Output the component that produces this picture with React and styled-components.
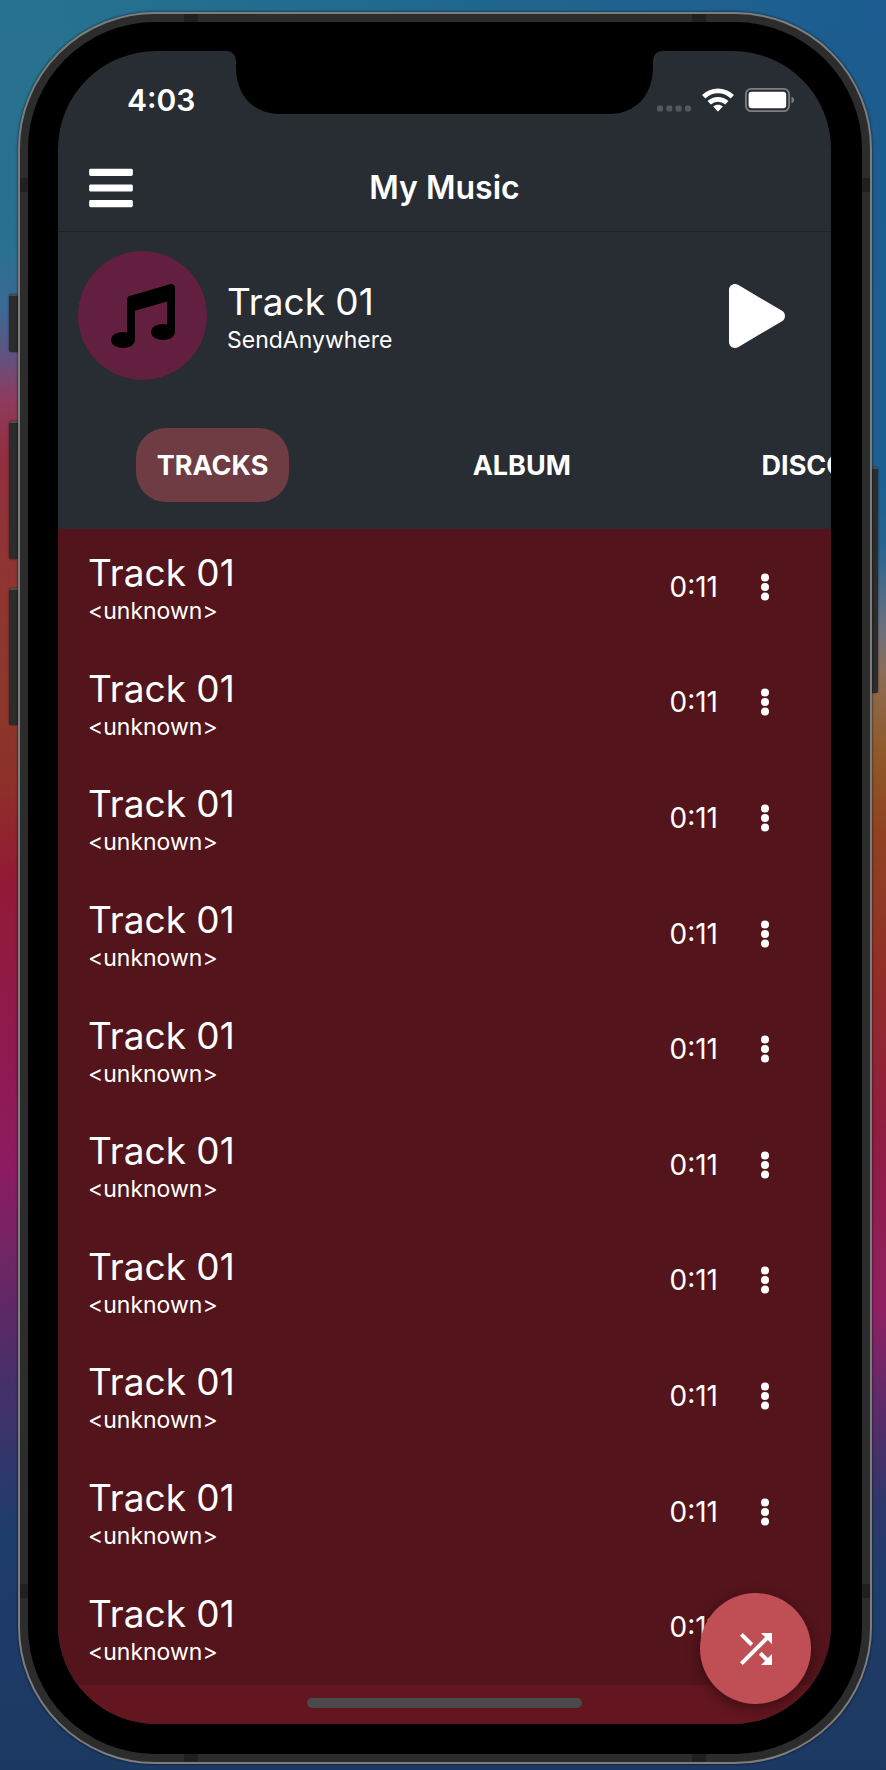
import React from "react";
import styled, { createGlobalStyle, css } from "styled-components";
import { FaBars, FaMusic, FaPlay } from "react-icons/fa";
import { MdShuffle } from "react-icons/md";

const GlobalStyle = createGlobalStyle`
  *, *::before, *::after { box-sizing: border-box; }
  body {
    margin: 0;
    background: #1c3963;
    font-family: Inter, "Liberation Sans", sans-serif;
    color: #fff;
  }
  button { font: inherit; color: inherit; border: 0; padding: 0; background: none; cursor: pointer; }
  svg { display: block; flex: none; }
`;

const leftWallpaper = `linear-gradient(180deg,
  #27728f 0, #27718f 240px, #3a6a94 305px, #5c5584 350px, #8f3a5e 400px, #902f3d 460px,
  #903434 560px, #8c382d 680px, #8e3128 780px, #931a35 880px, #8f1a4c 1020px,
  #8d1b60 1165px, #6f2565 1260px, #44306a 1390px, #1f3d6b 1530px, #1c3963 1770px)`;
const rightWallpaper = `linear-gradient(180deg,
  #1c5c8e 0, #1c5f90 480px, #2a648f 550px, #6b7080 625px, #8c6c55 675px, #8f5a2a 750px,
  #8f4222 830px, #902d28 980px, #8f1c40 1130px, #8e2062 1310px, #602a68 1400px,
  #30366a 1500px, #1e3d68 1580px, #1c3963 1770px)`;

const Desktop = styled.div`
  display: flex;
  min-height: 100vh;
  padding: 12px 14px 6px 18px;
  background:
    linear-gradient(90deg, #27738f, #20688f 50%, #1c5c90) top / 100% 30px no-repeat,
    ${leftWallpaper} left / 50% 100% no-repeat,
    ${rightWallpaper} right / 50% 100% no-repeat;
`;

const Device = styled.div`
  position: relative;
  display: flex;
  flex: 1;
  min-width: 0;
`;

const Frame = styled.div`
  position: relative;
  display: flex;
  flex: 1;
  min-width: 0;
  padding: 8px;
  border: 2px solid #7d7d7d;
  border-radius: 137px;
  background: #2c2c2c;
  box-shadow: 0 0 2px 1px rgba(0, 0, 0, 0.35);
`;

const Bezel = styled.div`
  position: relative;
  display: flex;
  flex: 1;
  min-width: 0;
  padding: 29px 31px 30px 30px;
  border-radius: 127px;
  background: #000;
`;

const Screen = styled.main`
  position: relative;
  display: flex;
  flex-direction: column;
  flex: 1;
  min-width: 0;
  overflow: hidden;
  border-radius: 98px;
  background: #282c33;
`;

const SideKey = styled.span`
  position: absolute;
  top: ${(p) => p.$top}px;
  height: ${(p) => p.$height}px;
  width: 9px;
  background: #2c2c2c;
  border-top: 2px solid #4c4c4c;
  box-shadow: 0 0 2px rgba(0, 0, 0, 0.6);
  ${(p) =>
    p.$side === "left"
      ? css`left: -9px; border-radius: 2px 0 0 2px;`
      : css`right: -6px; border-radius: 0 2px 2px 0;`}
`;

const Antenna = styled.span`
  position: absolute;
  background: #202020;
  ${(p) =>
    p.$edge === "top" || p.$edge === "bottom"
      ? css`width: 14px; height: 8px; ${p.$edge}: 0; ${p.$from}: 164px;`
      : css`width: 8px; height: 14px; ${p.$edge}: 0; ${p.$from}: 164px;`}
`;

const Notch = styled.svg`
  position: absolute;
  top: 0;
  left: 50%;
  margin-left: -219px;
`;

const StatusBar = styled.div`
  display: flex;
  align-items: center;
  justify-content: space-between;
  height: 98px;
  padding: 0 36px 0 69px;
`;

const Clock = styled.time`
  font-size: 30px;
  line-height: 36px;
  font-weight: 600;
`;

const StatusIcons = styled.div`
  display: flex;
  align-items: center;
  gap: 11px;
`;

const Header = styled.header`
  display: grid;
  grid-template-columns: 1fr auto 1fr;
  align-items: center;
  height: 83px;
  padding: 0 28px 4px;
  border-bottom: 1px solid #202326;
`;

const Title = styled.h1`
  margin: 0;
  font-size: 32px;
  line-height: 40px;
  font-weight: 600;
`;

const IconButton = styled.button`
  display: flex;
  justify-content: center;
  justify-self: start;
`;

const NowPlaying = styled.section`
  display: flex;
  align-items: center;
  gap: 20px;
  height: 167px;
  padding: 0 42px 0 20px;
`;

const Cover = styled.div`
  display: flex;
  align-items: center;
  justify-content: center;
  width: 129px;
  height: 129px;
  border-radius: 50%;
  background: #621f40;
  color: #000;
`;

const Labels = styled.div`
  flex: 1;
  min-width: 0;
  padding-top: 5px;
`;

const TrackName = styled.div`
  font-size: 37px;
  line-height: 44px;
`;

const Artist = styled.div`
  font-size: 23px;
  line-height: 32px;
`;

const Tabs = styled.nav`
  display: flex;
  height: 130px;
  padding: 29px 0 27px;
  overflow: hidden;
`;

const TabSlot = styled.div`
  display: flex;
  justify-content: center;
  flex: 0 0 40%;
`;

const Tab = styled.button`
  padding: 0 21px;
  border-radius: 30px;
  font-size: 27px;
  font-weight: 700;
  background: ${(p) => (p.$active ? "#703c43" : "transparent")};
`;

const TrackList = styled.ul`
  display: grid;
  flex: 1;
  grid-auto-rows: 1fr;
  margin: 0;
  padding: 0;
  list-style: none;
  background: #54141b;
`;

const TrackRow = styled.li`
  display: flex;
  align-items: center;
  padding: 0 50px 0 30px;
`;

const Duration = styled.span`
  font-size: 28px;
  line-height: 36px;
`;

const MoreButton = styled.button`
  display: flex;
  justify-content: center;
  width: 32px;
  margin-left: 31px;
`;

const HomeArea = styled.footer`
  display: flex;
  justify-content: center;
  height: 39px;
  padding-top: 13px;
  background: #63161f;
`;

const HomeIndicator = styled.span`
  width: 275px;
  height: 10px;
  border-radius: 5px;
  background: #4a4a4a;
`;

const ShuffleButton = styled.button`
  position: absolute;
  right: 20px;
  bottom: 20px;
  display: flex;
  align-items: center;
  justify-content: center;
  width: 111px;
  height: 111px;
  border-radius: 50%;
  background: #c04e55;
  box-shadow: 0 4px 14px rgba(0, 0, 0, 0.4);
`;

const SignalDots = () => (
  <svg width="34" height="24" viewBox="0 0 34 24" fill="#54585c" aria-hidden="true">
    {[0, 9.3, 18.6, 27.9].map((x) => (
      <rect key={x} x={x} y="17.5" width="6" height="6" rx="1.8" />
    ))}
  </svg>
);

const Wifi = () => (
  <svg width="32" height="24" viewBox="0 0 32 24" aria-label="Wi-Fi">
    <g fill="none" stroke="#fff" strokeWidth="4.8">
      <path d="M1.7 8.7C9.8 0.9 22.2 0.9 30.3 8.7" />
      <path d="M7.2 14.8C12.3 10.2 19.7 10.2 24.8 14.8" />
    </g>
    <path d="M11.2 18.6C14 16.2 18 16.2 20.8 18.6L16.6 23.1Q16 23.7 15.4 23.1Z" fill="#fff" />
  </svg>
);

const Battery = () => (
  <svg width="50" height="24" viewBox="0 0 50 24" aria-label="Battery full">
    <rect x="0.9" y="0.9" width="43.2" height="22.2" rx="5.4" fill="none" stroke="#7c7f83" strokeWidth="1.8" />
    <rect x="3.6" y="3.8" width="37.6" height="16.4" rx="3" fill="#fff" />
    <path d="M46.5 8.6C50 10 50 14 46.5 15.4Z" fill="#7c7f83" />
  </svg>
);

const MoreDots = () => (
  <svg width="8" height="28" viewBox="0 0 8 28" fill="#fff" aria-hidden="true">
    <circle cx="4" cy="4.4" r="4" />
    <circle cx="4" cy="14" r="4" />
    <circle cx="4" cy="23.6" r="4" />
  </svg>
);

const sideKeys = [
  { side: "left", top: 282, height: 58 },
  { side: "left", top: 409, height: 138 },
  { side: "left", top: 576, height: 137 },
  { side: "right", top: 455, height: 226 },
];

const antennas = [
  ["top", "left"],
  ["top", "right"],
  ["bottom", "left"],
  ["bottom", "right"],
  ["left", "top"],
  ["left", "bottom"],
  ["right", "top"],
  ["right", "bottom"],
];

const tabs = ["TRACKS", "ALBUM", "DISCOVER"];

const tracks = Array.from({ length: 10 }, (_, id) => ({
  id,
  name: "Track 01",
  artist: "<unknown>",
  duration: "0:11",
}));

export default function App() {
  return (
    <>
      <GlobalStyle />
      <Desktop>
        <Device>
          {sideKeys.map((k) => (
            <SideKey key={k.side + k.top} $side={k.side} $top={k.top} $height={k.height} />
          ))}
          <Frame>
            {antennas.map(([edge, from]) => (
              <Antenna key={edge + from} $edge={edge} $from={from} />
            ))}
            <Bezel>
              <Screen>
                <Notch width="437" height="63" viewBox="0 0 437 63" aria-hidden="true">
                  <path d="M0 0C7 0 10 4 10 11V16C10 45 28 63 54 63H383C409 63 427 45 427 16V11C427 4 430 0 437 0Z" />
                </Notch>
                <StatusBar>
                  <Clock>4:03</Clock>
                  <StatusIcons>
                    <SignalDots />
                    <Wifi />
                    <Battery />
                  </StatusIcons>
                </StatusBar>
                <Header>
                  <IconButton aria-label="Open menu">
                    <FaBars size={50} />
                  </IconButton>
                  <Title>My Music</Title>
                </Header>
                <NowPlaying>
                  <Cover>
                    <FaMusic size={64} />
                  </Cover>
                  <Labels>
                    <TrackName>Track 01</TrackName>
                    <Artist>SendAnywhere</Artist>
                  </Labels>
                  <IconButton aria-label="Play">
                    <FaPlay size={64} />
                  </IconButton>
                </NowPlaying>
                <Tabs>
                  {tabs.map((name, i) => (
                    <TabSlot key={name}>
                      <Tab $active={i === 0}>{name}</Tab>
                    </TabSlot>
                  ))}
                </Tabs>
                <TrackList>
                  {tracks.map((t) => (
                    <TrackRow key={t.id}>
                      <Labels>
                        <TrackName>{t.name}</TrackName>
                        <Artist>{t.artist}</Artist>
                      </Labels>
                      <Duration>{t.duration}</Duration>
                      <MoreButton aria-label="More options">
                        <MoreDots />
                      </MoreButton>
                    </TrackRow>
                  ))}
                </TrackList>
                <HomeArea>
                  <HomeIndicator />
                </HomeArea>
                <ShuffleButton aria-label="Shuffle">
                  <MdShuffle size={48} />
                </ShuffleButton>
              </Screen>
            </Bezel>
          </Frame>
        </Device>
      </Desktop>
    </>
  );
}
